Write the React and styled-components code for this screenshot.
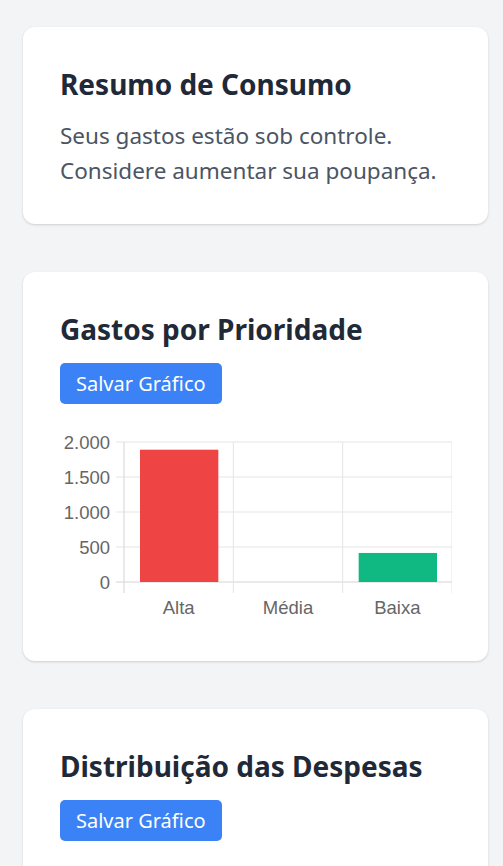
import React from 'react'
import styled, { createGlobalStyle } from 'styled-components'

const GlobalStyle = createGlobalStyle`
  body {
    margin: 0;
    background: #f3f4f6;
    font-family: "Noto Sans", "Open Sans", sans-serif;
  }
`

const Page = styled.div`
  display: flex;
  flex-direction: column;
  gap: 48px;
  padding: 27px 15px 40px 23px;
`

const Card = styled.section`
  background: #fff;
  border-radius: 12px;
  box-shadow: 0 1px 3px rgba(0, 0, 0, 0.1), 0 1px 2px rgba(0, 0, 0, 0.06);
  padding: 36px 37px;
`

const Title = styled.h2`
  margin: 0 0 13px;
  font-size: 28px;
  line-height: 42px;
  font-weight: 700;
  color: #1f2937;
`

const Text = styled.p`
  margin: 0;
  font-size: 22.5px;
  line-height: 35px;
  color: #4b5563;
`

const Button = styled.button`
  display: block;
  border: 0;
  border-radius: 5px;
  background: #3b82f6;
  color: #fff;
  font-family: inherit;
  font-size: 20px;
  line-height: 29px;
  padding: 6px 16px;
  cursor: pointer;
`

const ChartBox = styled.svg`
  display: block;
  margin-top: 16px;
  width: 392px;
  height: 205px;
  font-family: "Liberation Sans", Arial, sans-serif;
`

const data = [
  { label: 'Alta', value: 1890, color: '#ef4444' },
  { label: 'Média', value: 0, color: '#f59e0b' },
  { label: 'Baixa', value: 415, color: '#10b981' },
]

const BarChart = () => {
  // plot area in svg coords
  const left = 64
  const right = 392
  const top = 22
  const bottom = 162
  const max = 2000
  const colW = (right - left) / data.length
  const y = (v) => bottom - (v / max) * (bottom - top)
  const ticks = [0, 500, 1000, 1500, 2000]

  return (
    <ChartBox viewBox="0 0 392 205">
      {ticks.map((t) => (
        <g key={t}>
          <line x1={left - 8} x2={right} y1={y(t)} y2={y(t)} stroke={t === 0 ? '#d4d4d4' : '#e5e5e5'} />
          <text x={left - 14} y={y(t) + 6.5} textAnchor="end" fontSize="18.5" fill="#666">
            {t.toLocaleString('pt-BR')}
          </text>
        </g>
      ))}
      {[0, 1, 2, 3].map((i) => (
        <line
          key={i}
          x1={left + i * colW}
          x2={left + i * colW}
          y1={top}
          y2={bottom + 11}
          stroke={i === 0 ? '#d4d4d4' : '#e5e5e5'}
        />
      ))}
      {data.map((d, i) => (
        <g key={d.label}>
          {d.value > 0 && (
            <rect
              x={left + i * colW + 16}
              y={y(d.value)}
              width={colW - 31}
              height={bottom - y(d.value)}
              fill={d.color}
            />
          )}
          <text x={left + i * colW + colW / 2} y={194} textAnchor="middle" fontSize="18.5" fill="#666">
            {d.label}
          </text>
        </g>
      ))}
    </ChartBox>
  )
}

export default function App() {
  return (
    <>
      <GlobalStyle />
      <Page>
        <Card>
          <Title>Resumo de Consumo</Title>
          <Text>
            Seus gastos estão sob controle.
            <br />
            Considere aumentar sua poupança.
          </Text>
        </Card>
        <Card>
          <Title>Gastos por Prioridade</Title>
          <Button>Salvar Gráfico</Button>
          <BarChart />
        </Card>
        <Card>
          <Title>Distribuição das Despesas</Title>
          <Button>Salvar Gráfico</Button>
          <div style={{ height: 300 }} />
        </Card>
      </Page>
    </>
  )
}
